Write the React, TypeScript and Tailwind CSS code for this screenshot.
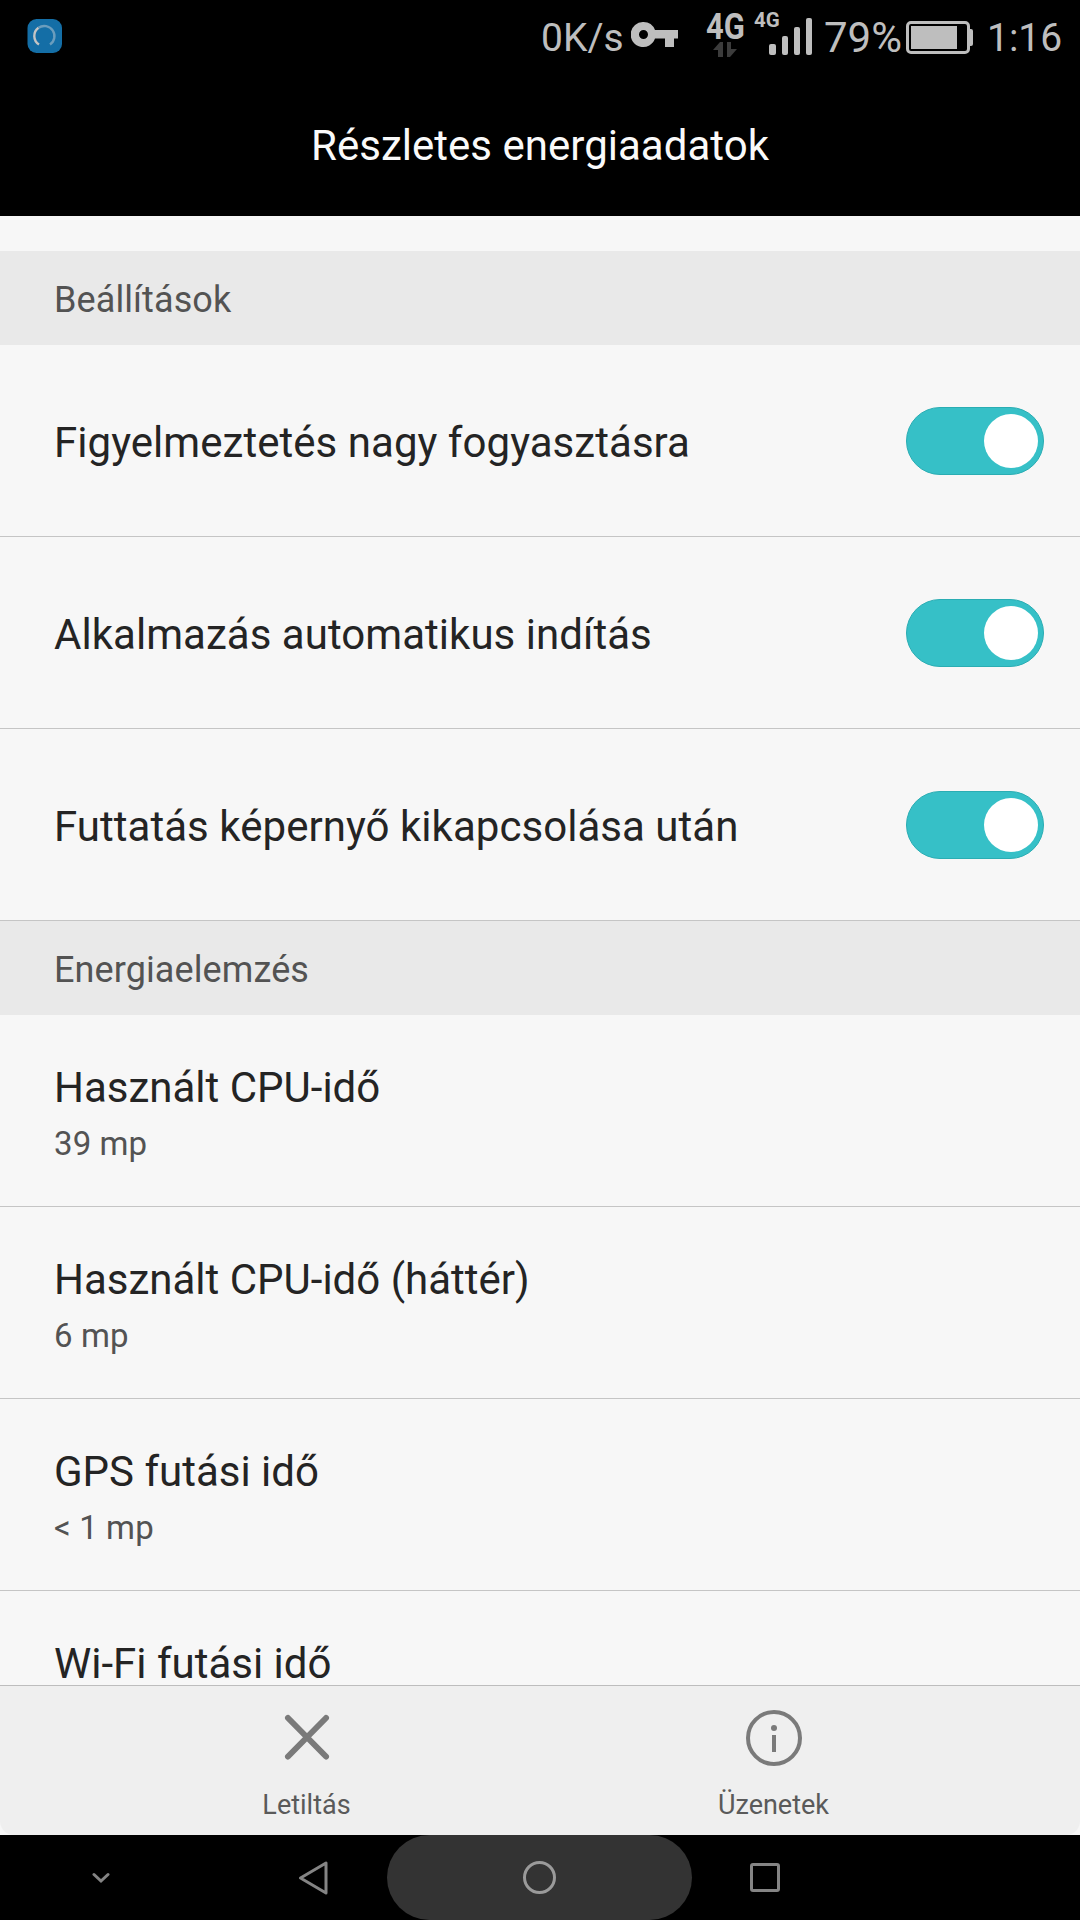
import React, { useState } from 'react';

const switches = [
  'Figyelmeztetés nagy fogyasztásra',
  'Alkalmazás automatikus indítás',
  'Futtatás képernyő kikapcsolása után',
];

const stats = [
  { label: 'Használt CPU-idő', value: '39 mp' },
  { label: 'Használt CPU-idő (háttér)', value: '6 mp' },
  { label: 'GPS futási idő', value: '< 1 mp' },
  { label: 'Wi-Fi futási idő' },
];

const StatusBar: React.FC = () => (
  <div className="flex h-[74px] items-start bg-black text-[39px] leading-[76px] text-[#bebebe]">
    <svg className="ml-[27px] mt-[19px] h-[34px] w-[35px] shrink-0" viewBox="0 0 35 34" fill="none">
      <rect x="0.5" width="34.5" height="34" rx="9" fill="#146ea6" />
      <path d="M12 25.6A10.2 10.2 0 0 1 11.5 8.75" stroke="#c4c4c4" strokeWidth="2.4" />
      <path d="M11.5 8.75A10.2 10.2 0 1 1 23 25.6" stroke="#6b9dbd" strokeWidth="2.4" />
    </svg>
    <span className="ml-auto w-[90px] shrink-0">0K/s</span>
    <svg className="mt-[22px] h-[26px] w-[47px] shrink-0" viewBox="0 0 47 26" fill="#bebebe">
      <path
        fillRule="evenodd"
        d="M12.5 0A12.5 12.5 0 0 1 24 8H47V16.5H43V25H34V16.5H24A12.5 12.5 0 1 1 12.5 0ZM12.5 8A4.5 4.5 0 1 0 12.5 17A4.5 4.5 0 0 0 12.5 8Z"
      />
    </svg>
    <div className="ml-[28px] w-[39px] shrink-0">
      <div className="h-[42px] w-[46px] origin-left scale-x-[0.86] text-[36px] leading-[54px] font-bold">4G</div>
      <svg className="ml-[7px] h-[16px] w-[24px]" viewBox="0 0 24 16" fill="#3c3c3c">
        <path d="M0 8L7 0H10V15H5V8Z" />
        <path d="M14 0H18V7H24L17 15H14Z" />
      </svg>
    </div>
    <div className="ml-[9px] w-[59px] shrink-0">
      <div className="h-[18px] text-[20.5px] leading-[41px] font-bold">4G</div>
      <svg className="ml-[15px] h-[37px] w-[44px]" viewBox="0 0 44 37" fill="#bebebe">
        <rect x="0" y="26" width="7" height="11" rx="2" />
        <rect x="13" y="18" width="6" height="19" rx="2" />
        <rect x="25" y="9" width="6" height="28" rx="2" />
        <rect x="37" y="0" width="6" height="37" rx="2" />
      </svg>
    </div>
    <span className="ml-[11px] w-[82px] shrink-0 text-[42px]">79%</span>
    <svg className="mt-[21px] h-[33px] w-[68px] shrink-0" viewBox="0 0 68 33">
      <rect x="1.5" y="1.5" width="61" height="30" rx="3.5" fill="none" stroke="#bebebe" strokeWidth="3" />
      <rect x="5" y="5" width="46" height="23" fill="#bebebe" />
      <path d="M64 8H65Q67 8 67 10V23Q67 25 65 25H64Z" fill="#bebebe" />
    </svg>
    <span className="ml-[13px] w-[93px] shrink-0">1:16</span>
  </div>
);

const SectionHeader: React.FC<{ title: string }> = ({ title }) => (
  <h2 className="h-[94px] bg-[#e9e9e9] px-[54px] pt-[2px] text-[36px] leading-[94px] tracking-[0.1px] text-[#535353]">
    {title}
  </h2>
);

const SwitchRow: React.FC<{ label: string }> = ({ label }) => {
  const [on, setOn] = useState(true);

  return (
    <div className="flex h-[192px] items-center justify-between border-b border-[#c5c5c5] pr-[36px] pl-[54px]">
      <span className="pt-[4px] text-[42px] leading-[50px] tracking-[0.04px] text-[#242424]">{label}</span>
      <button
        role="switch"
        aria-checked={on}
        aria-label={label}
        onClick={() => setOn(!on)}
        className={`flex h-[68px] w-[138px] items-center rounded-full border px-[5px] ${
          on ? 'justify-end border-[#2aadb3] bg-[#36c0c7]' : 'justify-start border-[#b0b0b0] bg-[#c8c8c8]'
        }`}
      >
        <span className="h-[54px] w-[54px] rounded-full bg-white" />
      </button>
    </div>
  );
};

const StatRow: React.FC<{ label: string; value?: string }> = ({ label, value }) => (
  <div className="h-[192px] border-b border-[#c5c5c5] px-[54px] pt-[52px]">
    <div className="text-[42px] leading-[42px] text-[#242424]">{label}</div>
    {value && <div className="mt-[14px] text-[33px] leading-[42px] tracking-[0.1px] text-[#535353]">{value}</div>}
  </div>
);

const ActionBar: React.FC = () => (
  <div className="h-[150px] bg-[#f7f7f7]">
    <div className="flex h-full justify-center rounded-b-[14px] border-t border-[#bdbdbd] bg-[#efefef] text-[27px] leading-[32px] text-[#5a5a5a]">
      <button className="flex w-[467px] flex-col items-center pt-[23px]">
        <svg className="h-[58px] w-[58px]" viewBox="0 0 58 58" fill="none" stroke="#7a7a7a" strokeWidth="6" strokeLinecap="round">
          <path d="M10 9L48 47.5M48 9L10 47.5" />
        </svg>
        <span className="mt-[22px]">Letiltás</span>
      </button>
      <button className="flex w-[467px] flex-col items-center pt-[23px]">
        <svg className="h-[58px] w-[58px]" viewBox="0 0 58 58" fill="#7a7a7a">
          <circle cx="29" cy="29" r="26" fill="none" stroke="#7a7a7a" strokeWidth="4" />
          <circle cx="29" cy="19" r="3" />
          <rect x="27" y="26" width="4" height="17" />
        </svg>
        <span className="mt-[22px]">Üzenetek</span>
      </button>
    </div>
  </div>
);

const NavBar: React.FC = () => (
  <div className="flex h-[85px] items-center bg-black">
    <button className="flex w-[201px] justify-center" aria-label="Hide">
      <svg className="h-[12px] w-[18px]" viewBox="0 0 18 12" fill="none" stroke="#848484" strokeWidth="3">
        <path d="M2 2.5L9 9L16 2.5" strokeLinecap="round" />
      </svg>
    </button>
    <button className="flex w-[186px] justify-center pl-[38px]" aria-label="Back">
      <svg className="h-[34px] w-[32px]" viewBox="0 0 32 34" fill="none" stroke="#848484" strokeWidth="3" strokeLinejoin="round">
        <path d="M29 2V32L3.5 17Z" />
      </svg>
    </button>
    <button className="flex h-[85px] w-[305px] items-center justify-center rounded-full bg-[#333333]" aria-label="Home">
      <span className="h-[33px] w-[33px] rounded-full border-[3px] border-[#9a9a9a]" />
    </button>
    <button className="flex w-[146px] justify-center" aria-label="Recents">
      <span className="h-[29px] w-[30px] rounded-[3px] border-[3px] border-[#848484]" />
    </button>
  </div>
);

const App: React.FC = () => {
  return (
    <div className="flex h-[1920px] w-[1080px] flex-col overflow-hidden bg-[#f7f7f7] font-['Roboto',sans-serif]">
      <StatusBar />
      <header className="h-[142px] shrink-0 bg-black text-center text-[42px] leading-[144px] tracking-[0.02px] text-[#fafafa]">
        Részletes energiaadatok
      </header>

      <main className="h-[1469px] shrink-0 overflow-hidden pt-[35px]">
        <SectionHeader title="Beállítások" />
        {switches.map((label) => (
          <SwitchRow key={label} label={label} />
        ))}
        <SectionHeader title="Energiaelemzés" />
        {stats.map((stat) => (
          <StatRow key={stat.label} label={stat.label} value={stat.value} />
        ))}
      </main>

      <ActionBar />
      <NavBar />
    </div>
  );
};

export default App;
